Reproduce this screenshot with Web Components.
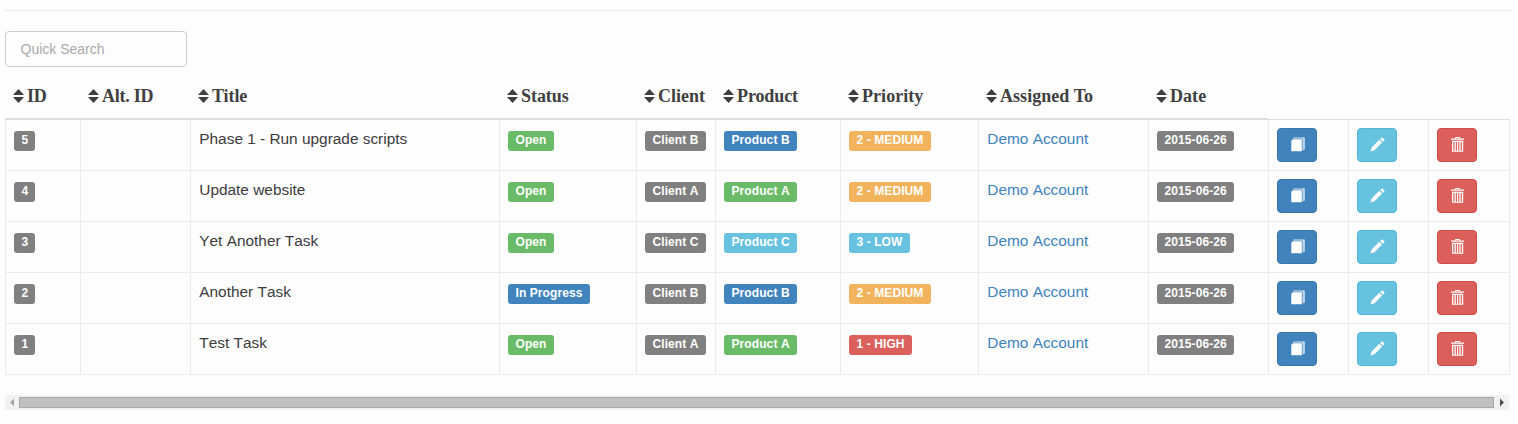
<!DOCTYPE html>
<html lang="en"><head><meta charset="utf-8"><title>Tasks</title>
<style>
body{margin:0;background:#fdfdfd;font:15.4px/21px "Liberation Sans",Arial,sans-serif;color:#3b3b3b}
</style></head><body>
<task-page></task-page>
<script>
const define=(name,html,setup)=>customElements.define(name,class extends HTMLElement{
  connectedCallback(){
    if(this.shadowRoot)return;
    this.attachShadow({mode:'open'}).innerHTML=html;
    if(setup)setup(this,this.shadowRoot);
  }
});

define('task-badge',`<style>
:host{display:inline-block;box-sizing:border-box;height:20px;padding:0 7.1px 0 7.5px;border-radius:3px;background:#808080;color:#fff;font:bold 12px/18px "Liberation Sans",Arial,sans-serif;font-kerning:none;letter-spacing:.09px;white-space:nowrap;vertical-align:top}
:host([kind=success]){background:#69bb67}
:host([kind=primary]){background:#4183bc}
:host([kind=warning]){background:#f1b35b}
:host([kind=info]){background:#67c2df}
:host([kind=danger]){background:#db5f5b}
</style><slot></slot>`);

define('search-box',`<style>
:host{display:block;width:182px;height:36px}
input{display:block;box-sizing:border-box;width:100%;height:100%;margin:0;padding:0 14px 0 14.5px;border:1px solid #ccc;border-radius:4px;background:#fdfdfd;font:14px "Liberation Sans",Arial,sans-serif;color:#555;outline:0}
input::placeholder{color:#aaa;opacity:1}
</style><input placeholder="Quick Search" aria-label="Quick Search">`);

define('sort-heading',`<style>
:host{display:flex;align-items:center;box-sizing:border-box;height:41px;padding:0 0 5px 8px;border-bottom:2px solid #ddd;font:bold 18px/24px "Liberation Serif",serif;color:#3f3f3f;white-space:nowrap}
svg{width:11px;height:14px;margin-right:3px;flex:none}
</style><svg viewBox="0 0 11 14"><path fill="#3f3f3f" d="M0 6 5.5 0 11 6zM0 8h11l-5.5 6z"/></svg><slot></slot>`);

const icons={
 view:'<path fill="#fff" d="M2.9 2.2H11.8V14.2H1.3V3.8z"/><path fill="#fff" fill-opacity=".85" d="M3.8.6H14.7V12.4L12.6 13.6V1.6H2.8z"/><path fill="#4183bc" fill-opacity=".45" d="M13.3 2h.5v10.4l-.5.4z"/>',
 edit:'<path fill="#fff" d="M.4 14.4 1.7 10.4 9.3 2.8l2.8 2.8L4.5 13.2zM10.2 1.9l1.2-1.2q.6-.5 1.3 0l1.6 1.6q.5.7 0 1.3L13.1 4.8z"/>',
 remove:'<path fill="#fff" fill-rule="evenodd" d="M1 1.6h3.7V.9l.9-.9h3.9l.9.9v.7H14v1.2H1zM5.7 1v.6h3.7V1zM2 3.8h11.2v11H2zM3.3 4.9v8.9h1.2V4.9zm2.5 0v8.9H7V4.9zm2.4 0v8.9h1.2V4.9zm2.5 0v8.9h1.2V4.9z"/>'
};
define('action-button',`<style>
:host{display:block}
button{display:flex;align-items:center;justify-content:center;box-sizing:border-box;width:40px;height:34px;padding:0 0 2px 1px;border:1px solid #3975a9;border-radius:4px;background:#4183bc}
:host([icon=edit]) button{background:#67c2df;border-color:#50b7d8}
:host([icon=remove]) button{background:#db5f5b;border-color:#d24b46}
svg{width:15px;height:15px;display:block}
</style><button></button>`,(el,root)=>{
 const b=root.querySelector('button');
 b.setAttribute('aria-label',el.getAttribute('icon'));
 b.innerHTML='<svg viewBox="0 0 15 15">'+icons[el.getAttribute('icon')]+'</svg>';
});

define('task-cell',`<style>
:host{display:block;box-sizing:border-box;height:51px;padding:8px 0 0 8px;border-left:1px solid #ebebeb;border-bottom:1px solid #ebebeb;white-space:nowrap;font-kerning:none}
:host([text]){padding-left:8.3px}
:host([tag]){padding-top:11px}
:host([last]){border-right:1px solid #ebebeb}
::slotted(a){color:#4083bd;text-decoration:none}
</style><slot></slot>`);

define('scroll-track',`<style>
:host{display:flex;align-items:center;box-sizing:border-box;width:1504px;height:15px;background:#f1f1f1}
i{box-sizing:border-box;flex:1;height:11px;background:#c0c0c0;border:1px solid #a8a8a8}
svg{width:14px;height:15px;flex:none}
svg:last-child{width:15px}
</style><svg viewBox="0 0 14 15"><path fill="#a3a3a3" d="M9 3.7v7.6L5 7.5z"/></svg><i></i><svg viewBox="0 0 15 15"><path fill="#505050" d="M6 3.5v8l4-4z"/></svg>`);

const headings=[['ID',-.2],['Alt. ID',-.25],['Title',-.1],['Status',-.05],['Client',0],['Product',-.1],['Priority',.05],['Assigned To',.05],['Date',.05]];
const tasks=[
 [5,'Phase 1 - Run upgrade scripts','Open','B','2 - MEDIUM'],
 [4,'Update website','Open','A','2 - MEDIUM'],
 [3,'Yet Another Task','Open','C','3 - LOW'],
 [2,'Another Task','In Progress','B','2 - MEDIUM'],
 [1,'Test Task','Open','A','1 - HIGH']];
const productKind={A:'success',B:'primary',C:'info'};
const priorityKind={1:'danger',2:'warning',3:'info'};
const badge=(text,kind='default')=>`<task-cell tag><task-badge kind="${kind}">${text}</task-badge></task-cell>`;

define('task-table',`<style>
:host{display:grid;width:1505px;grid-template-columns:75px 110px 309px 137px 79px 125px 138px 170px 120px 80px 80px 82px}
.blank{grid-column:span 3;border-bottom:1px solid #ddd}
</style>`,(el,root)=>{
 root.innerHTML+=headings.map(([t,s])=>`<sort-heading style="letter-spacing:${s}px">${t}</sort-heading>`).join('')
 +'<div class="blank"></div>'
 +tasks.map(([id,title,status,letter,priority])=>
  badge(id)+'<task-cell></task-cell>'+`<task-cell text>${title}</task-cell>`
  +badge(status,status==='Open'?'success':'primary')+badge('Client '+letter)
  +badge('Product '+letter,productKind[letter])+badge(priority,priorityKind[priority[0]])
  +'<task-cell text><a href="#">Demo Account</a></task-cell>'+badge('2015-06-26')
  +'<task-cell><action-button icon="view"></action-button></task-cell>'
  +'<task-cell><action-button icon="edit"></action-button></task-cell>'
  +'<task-cell last><action-button icon="remove"></action-button></task-cell>').join('');
});

define('task-page',`<style>
:host{display:block;box-sizing:border-box;height:424px;padding:10px 0 0 5px;overflow:hidden}
hr{width:1505px;height:1px;margin:0 0 20px;border:0;background:#ebebeb}
search-box{margin-bottom:12px}
task-table{margin-bottom:20px}
</style><hr><search-box></search-box><task-table></task-table><scroll-track></scroll-track>`);
</script></body></html>
